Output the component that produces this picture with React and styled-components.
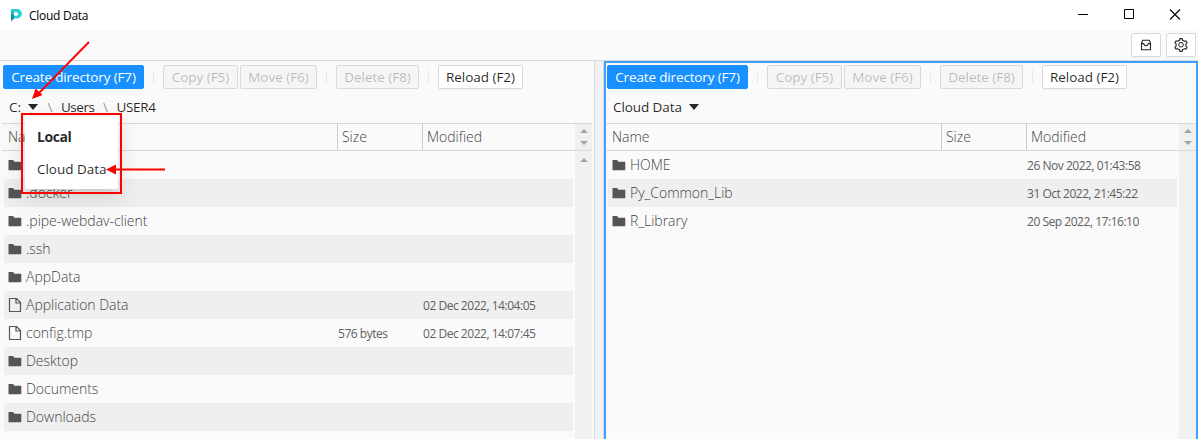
import React from "react";
import styled, { createGlobalStyle, css } from "styled-components";
import { AiOutlineSetting } from "react-icons/ai";

const Global = createGlobalStyle`
  * { box-sizing: border-box; }
  html, body, #root { margin: 0; height: 100%; overflow: hidden; }
  body {
    font-family: "Open Sans", "Noto Sans", sans-serif;
    font-size: 14px;
    font-weight: 300;
    letter-spacing: -0.02px;
    color: rgba(0, 0, 0, 0.85);
    background: #fafafa;
  }
`;

const Window = styled.div`
  width: 1198px;
  height: 439px;
  display: flex;
  flex-direction: column;
  position: relative;
  overflow: hidden;
`;

const TitleBar = styled.header`
  flex: 0 0 30px;
  display: flex;
  align-items: center;
  padding: 0 17px 0 11px;
  background: #fff;
  color: #000;
`;

const AppName = styled.span`
  margin-left: 7px;
  flex: 1;
  font-size: 12px;
  font-weight: 400;
  letter-spacing: -0.27px;
`;

const WindowControls = styled.div`
  display: flex;
  gap: 34px;
  svg { display: block; width: 12px; height: 12px; }
`;

const Toolbar = styled.div`
  flex: 0 0 31px;
  display: flex;
  justify-content: flex-end;
  align-items: flex-start;
  gap: 5px;
  padding: 3px 2px 0 0;
  border-bottom: 1px solid #d9d9d9;
`;

const IconButton = styled.button`
  width: 30px;
  height: 24px;
  padding: 0;
  display: flex;
  align-items: center;
  justify-content: center;
  color: #262626;
  background: #fff;
  border: 1px solid #d9d9d9;
  border-radius: 2px;
  box-shadow: 0 2px 0 rgba(0, 0, 0, 0.015);
`;

const Panels = styled.main`
  flex: 1;
  min-height: 0;
  display: flex;
`;

const Gutter = styled.div`
  flex: 0 0 10px;
  background: #f0f2f5;
  border: solid #d9d9d9;
  border-width: 0 1px;
`;

const PanelBox = styled.section`
  flex: 0 0 594px;
  display: flex;
  flex-direction: column;
  border: 2px solid ${(p) => (p.$active ? "#40a0ff" : "transparent")};
  border-bottom: 0;
`;

const Actions = styled.div`
  flex: 0 0 26px;
  display: flex;
  align-items: flex-start;
  padding: 2px 0 0 1px;
`;

const Button = styled.button`
  width: ${(p) => p.$width}px;
  height: 24px;
  padding: 0 0 1px;
  margin-right: 2px;
  font: 400 13.5px "Open Sans", "Noto Sans", sans-serif;
  white-space: nowrap;
  letter-spacing: ${(p) => p.$track ?? -0.03}px;
  border: 1px solid #d9d9d9;
  border-radius: 2px;
  background: #fff;
  color: rgba(0, 0, 0, 0.85);
  box-shadow: 0 2px 0 rgba(0, 0, 0, 0.015);
  ${(p) => p.$primary && css`
    background: #1890ff;
    border-color: #1890ff;
    color: #fff;
  `}
  &:disabled {
    background: #f5f5f5;
    color: rgba(0, 0, 0, 0.25);
    box-shadow: none;
  }
`;

const Divider = styled.span`
  width: 1px;
  height: 13px;
  margin: 5px 9px 0 7px;
  background: #e8e8e8;
`;

const PathBar = styled.nav`
  flex: 0 0 34px;
  display: flex;
  align-items: center;
  padding: 2px 0 0 7px;
  white-space: pre;
  font-size: 13.5px;
  font-weight: 400;
`;

const Crumb = styled.span`
  letter-spacing: ${(p) => p.$track ?? -0.08}px;
`;

const Slash = styled.span`
  width: 22px;
  text-align: center;
  color: rgba(0, 0, 0, 0.45);
`;

const Caret = styled.svg`
  width: 10px;
  height: 6px;
  margin: 0 1px 0 7px;
  fill: rgba(0, 0, 0, 0.85);
`;

const HeaderRow = styled.div`
  flex: 0 0 28px;
  display: flex;
  border: solid #d9d9d9;
  border-width: 1px 0;
  color: #444;
`;

const HeaderCell = styled.div`
  width: ${(p) => p.$width}px;
  padding-left: ${(p) => p.$pad}px;
  border-right: ${(p) => (p.$last ? 0 : 1)}px solid #ccc;
  line-height: 26px;
`;

const Track = styled.div`
  width: 17px;
  margin-left: auto;
  padding: ${(p) => (p.$header ? "5px 0" : "7px 0")};
  display: flex;
  flex-direction: column;
  align-items: center;
  justify-content: space-between;
  background: #f0f0f0;
  svg { width: 8px; height: 4px; fill: #a3a3a3; display: block; }
`;

const Body = styled.div`
  flex: 1;
  min-height: 0;
  display: flex;
`;

const Rows = styled.div`
  width: 569px;
  margin-left: 2px;
  color: #444;
`;

const Row = styled.div`
  height: 28px;
  display: flex;
  align-items: center;
  padding-left: 4px;
  background: ${(p) => (p.$odd ? "#efefef" : "transparent")};
  svg { width: 14px; height: 14px; margin-right: 4px; display: block; }
`;

const Name = styled.span`
  width: 312px;
  padding-bottom: 1px;
`;

const Meta = styled.span`
  width: ${(p) => p.$width}px;
  font-size: 12px;
  font-weight: 400;
  color: #606060;
  letter-spacing: -0.47px;
  white-space: nowrap;
`;

const Menu = styled.div`
  position: absolute;
  left: 25px;
  top: 117px;
  width: 93px;
  height: 72px;
  padding: 4px 0;
  background: #fff;
  border-radius: 2px;
  box-shadow: 0 3px 6px -4px rgba(0, 0, 0, 0.12), 0 6px 16px 0 rgba(0, 0, 0, 0.08),
    0 9px 28px 8px rgba(0, 0, 0, 0.05);
`;

const MenuItem = styled.div`
  height: 32px;
  line-height: 32px;
  padding-left: 12px;
  white-space: nowrap;
  font-size: 13.5px;
  font-weight: 400;
  ${(p) => p.$selected && css`
    font-size: 14px;
    font-weight: 700;
    letter-spacing: -0.45px;
  `}
`;

const Highlight = styled.div`
  position: absolute;
  left: 21px;
  top: 113px;
  width: 101px;
  height: 81px;
  border: 2px solid #f00;
`;

const Pointers = styled.svg`
  position: absolute;
  left: 0;
  top: 0;
  width: 200px;
  height: 200px;
  pointer-events: none;
`;

const Up = () => <svg viewBox="0 0 8 4"><path d="M0 4 4 0l4 4z" /></svg>;
const Down = () => <svg viewBox="0 0 8 4"><path d="M0 0l4 4 4-4z" /></svg>;

const FolderIcon = () => (
  <svg viewBox="0 0 14 14"><path fill="#555" d="M.5 2H5l1.500 1.700h6.200a.6.6 0 0 1 .6.6v7.300a.6.6 0 0 1-.6.6H.5z" /></svg>
);
const FileIcon = () => (
  <svg viewBox="0 0 14 14">
    <path fill="none" stroke="#555" strokeWidth="1.200" d="M1.500.5h7l4 4v9h-11zM8 .6v4.400h4.400" />
  </svg>
);

const DriveCaret = () => <Caret viewBox="0 0 10 6"><path d="M0 0h10L5 6z" /></Caret>;

const local = [
  { name: "" },
  { name: ".docker" },
  { name: ".pipe-webdav-client" },
  { name: ".ssh" },
  { name: "AppData" },
  { name: "Application Data", file: true, modified: "02 Dec 2022, 14:04:05" },
  { name: "config.tmp", file: true, size: "576 bytes", modified: "02 Dec 2022, 14:07:45" },
  { name: "Desktop" },
  { name: "Documents" },
  { name: "Downloads" },
];
const cloud = [
  { name: "HOME", modified: "26 Nov 2022, 01:43:58" },
  { name: "Py_Common_Lib", modified: "31 Oct 2022, 21:45:22" },
  { name: "R_Library", modified: "20 Sep 2022, 17:16:10" },
];

function Panel({ active, path, rows, scrollable }) {
  return (
    <PanelBox $active={active}>
      <Actions>
        <Button $primary $width={141} $track={-0.15}>Create directory (F7)</Button>
        <Divider />
        <Button disabled $width={75}>Copy (F5)</Button>
        <Button disabled $width={77}>Move (F6)</Button>
        <Divider />
        <Button disabled $width={83}>Delete (F8)</Button>
        <Divider />
        <Button $width={85}>Reload (F2)</Button>
      </Actions>
      <PathBar>{path}</PathBar>
      <HeaderRow>
        <HeaderCell $width={336} $pad={6}>Name</HeaderCell>
        <HeaderCell $width={85} $pad={4}>Size</HeaderCell>
        <HeaderCell $width={152} $pad={4} $last>Modified</HeaderCell>
        <Track $header><Up /><Down /></Track>
      </HeaderRow>
      <Body>
        <Rows>
          {rows.map((r, i) => (
            <Row key={i} $odd={i % 2 === 1}>
              {r.file ? <FileIcon /> : <FolderIcon />}
              <Name>{r.name}</Name>
              <Meta $width={85}>{r.size}</Meta>
              <Meta $width={130}>{r.modified}</Meta>
            </Row>
          ))}
        </Rows>
        <Track>{scrollable && <Up />}</Track>
      </Body>
    </PanelBox>
  );
}

export default function App() {
  return (
    <Window>
      <Global />
      <TitleBar>
        <svg width="11" height="13" viewBox="0 0 11 13">
          <path fill="#2ad0d6" d="M0 0h6.200a4.700 4.700 0 0 1 0 9.400H3V6.700h3a1.900 1.900 0 0 0 0-3.400H3z" />
          <path fill="#0e8f9c" d="M0 3.300h3v6.100L0 12.500z" />
          <path fill="#1fb3be" d="M0 0l3 3.300v3.400L0 5z" />
        </svg>
        <AppName>Cloud Data</AppName>
        <WindowControls>
          <svg viewBox="0 0 12 12" stroke="#000"><path d="M1 5.500h10" /></svg>
          <svg viewBox="0 0 12 12" stroke="#000" fill="none"><path d="M1.500.5h9v9h-9z" /></svg>
          <svg viewBox="0 0 12 12" stroke="#000" strokeWidth="1.100"><path d="M1 .5l10 10M11 .5l-10 10" /></svg>
        </WindowControls>
      </TitleBar>
      <Toolbar>
        <IconButton>
          <svg width="12" height="12" viewBox="0 0 12 12" fill="none" stroke="#262626" strokeWidth="1.100">
            <path d="M1.500 4 2.700 1.200h6.600L10.500 4v6.800h-9zM1.500 4.600h2.200q.5 2.200 2.300 2.200t2.300-2.200h2.200" />
          </svg>
        </IconButton>
        <IconButton><AiOutlineSetting size={16} /></IconButton>
      </Toolbar>
      <Panels>
        <Panel
          scrollable
          rows={local}
          path={<><Crumb>C:</Crumb><DriveCaret /><Slash>\</Slash><Crumb $track={-0.45}>Users</Crumb><Slash>\</Slash><Crumb $track={-0.3}>USER4</Crumb></>}
        />
        <Gutter />
        <Panel active rows={cloud} path={<><Crumb>Cloud Data</Crumb><DriveCaret /></>} />
      </Panels>
      <Menu>
        <MenuItem $selected>Local</MenuItem>
        <MenuItem>Cloud Data</MenuItem>
      </Menu>
      <Highlight />
      <Pointers viewBox="0 0 200 200" stroke="#f00" fill="#f00">
        <path strokeWidth="1.800" d="M89 42 39 93M165 169.500h-50" />
        <path stroke="none" d="M32 99l3.500-10.500 7 6.500zM106 169.500l10-5v10z" />
      </Pointers>
    </Window>
  );
}
